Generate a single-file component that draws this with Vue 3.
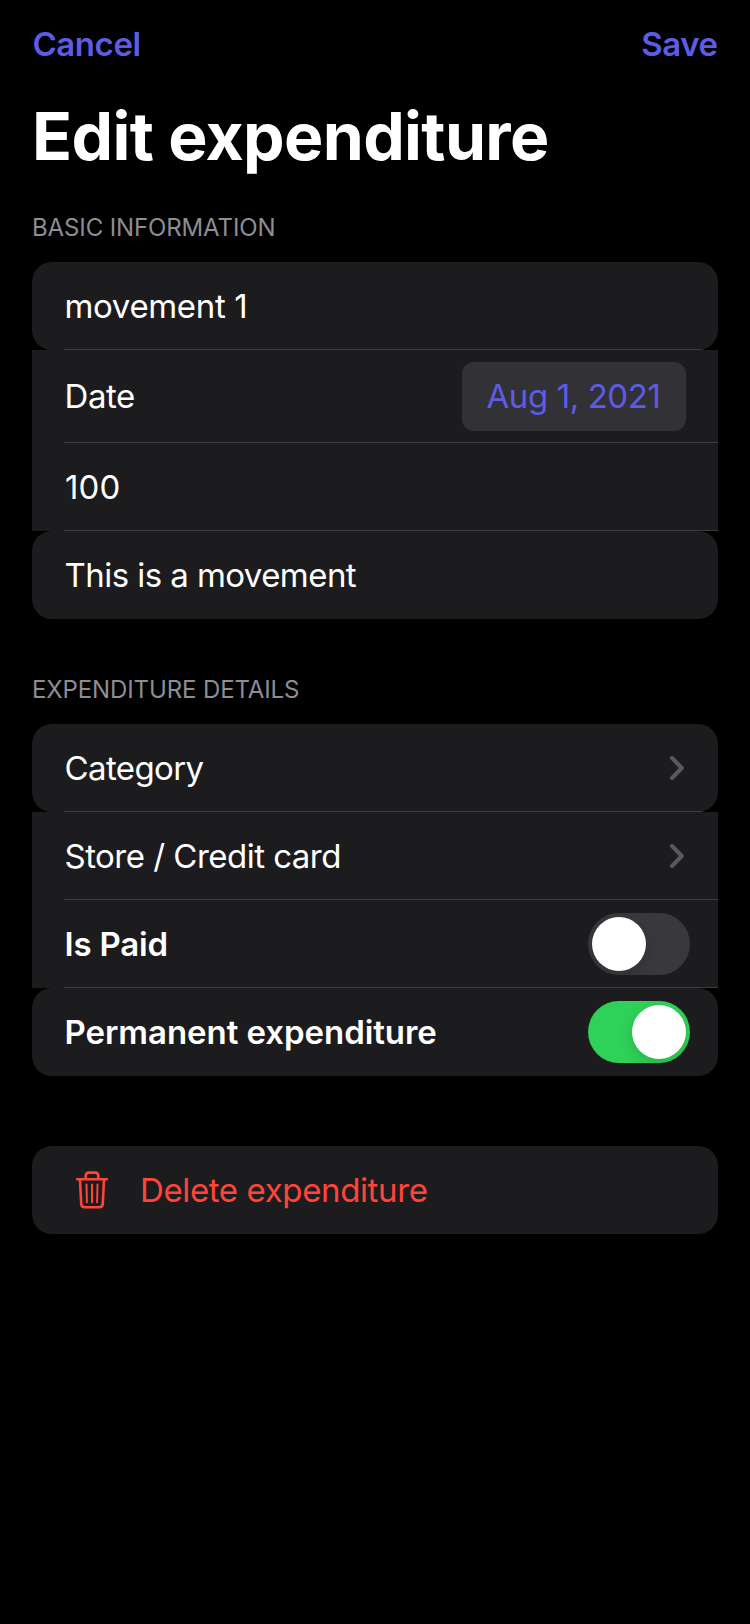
<script setup>
const basic = [
  { label: 'movement 1', cls: 't-move' },
  { label: 'Date', cls: 't-date', date: 'Aug 1, 2021' },
  { label: '100', cls: 't-num' },
  { label: 'This is a movement', cls: 't-note' },
]
const details = [
  { label: 'Category', cls: 't-cat', link: true },
  { label: 'Store / Credit card', cls: 't-store', link: true },
  { label: 'Is Paid', cls: 'strong t-paid', toggle: 'off' },
  { label: 'Permanent expenditure', cls: 'strong', toggle: 'on' },
]
</script>

<template>
  <main class="screen">
    <nav class="bar">
      <span class="action cancel">Cancel</span>
      <span class="action save">Save</span>
    </nav>
    <h1 class="title">Edit expenditure</h1>
    <h2 class="heading">BASIC INFORMATION</h2>
    <section class="group">
      <div v-for="r in basic" :key="r.label" class="row" :class="{ tall: r.date }">
        <span class="label" :class="r.cls">{{ r.label }}</span>
        <span v-if="r.date" class="date">{{ r.date }}</span>
      </div>
    </section>
    <h2 class="heading second">EXPENDITURE DETAILS</h2>
    <section class="group">
      <div v-for="r in details" :key="r.label" class="row">
        <span class="label" :class="r.cls">{{ r.label }}</span>
        <svg v-if="r.link" class="chevron" width="16" height="26" viewBox="0 0 16 26">
          <path d="M3 3L12.8 13L3 23" />
        </svg>
        <span v-if="r.toggle" class="toggle" :class="r.toggle"><span class="knob"></span></span>
      </div>
    </section>
    <section class="group danger">
      <div class="row">
        <svg class="trash" width="34" height="38" viewBox="0 0 34 38">
          <path d="M2.2 8.3H31.8M10.7 8V5Q10.7 1.6 13.8 1.6H20.2Q23.3 1.6 23.3 5V8M5 8.5L6.2 32.6Q6.4 36.2 9.8 36.2H24.2Q27.6 36.2 27.8 32.6L29 8.5" />
          <path class="thin" d="M11.5 13.5L11.9 31.2M17 13.5V31.2M22.5 13.5L22.1 31.2" />
        </svg>
        <span class="label t-del">Delete expenditure</span>
      </div>
    </section>
  </main>
</template>

<style>
html, body { background: #000; }
</style>

<style scoped>
.screen {
  box-sizing: border-box;
  width: 750px;
  height: 1624px;
  overflow: hidden;
  padding: 0 32px;
  background: #000;
  color: #fff;
  font-family: Inter, "Liberation Sans", sans-serif;
}

.bar { display: flex; justify-content: space-between; align-items: center; height: 88px; }
.action { color: #5e5ce6; font-size: 33px; font-weight: 600; line-height: 40px; }
.cancel { letter-spacing: -0.45px; padding-left: 0.5px; }
.save { letter-spacing: -0.5px; padding-right: 0.5px; }

.title { margin: 0; height: 96px; line-height: 96px; font-size: 66px; font-weight: 700; letter-spacing: -0.65px; }
.heading {
  box-sizing: border-box;
  margin: 0;
  height: 78px;
  padding-top: 28px;
  line-height: 32px;
  font-size: 24px;
  font-weight: 400;
  letter-spacing: -0.12px;
  color: #8d8d93;
}
.second { margin-top: 27px; }

.row {
  position: relative;
  box-sizing: border-box;
  display: flex;
  align-items: center;
  height: 88px;
  padding: 0 28px 0 32.5px;
  background: #1c1c1e;
  overflow: hidden;
}
.row:first-child, .row:last-child { border-radius: 20px; }
.row:not(:last-child)::after {
  content: "";
  position: absolute;
  left: 32px;
  right: 0;
  bottom: 0;
  height: 1px;
  background: #3d3d41;
}
.tall { height: 93px; padding-right: 32px; }

.label { flex: 1; font-size: 33px; line-height: 40px; font-weight: 400; white-space: nowrap; }
.strong { font-weight: 600; letter-spacing: -0.05px; }
.t-paid { letter-spacing: -0.2px; }
.t-move { letter-spacing: -0.35px; }
.t-date { letter-spacing: -0.4px; padding-bottom: 2px; }
.t-num { letter-spacing: 0.1px; padding-left: 0.5px; }
.t-note { letter-spacing: -0.56px; }
.t-cat { letter-spacing: -0.6px; }
.t-store { letter-spacing: -0.52px; }
.t-del { letter-spacing: -0.38px; color: #ff453a; }

.date {
  box-sizing: border-box;
  display: flex;
  align-items: center;
  justify-content: center;
  width: 224px;
  height: 69px;
  padding: 0 1px 2px 0;
  border-radius: 12px;
  background: #323136;
  color: #5e5ce6;
  font-size: 33px;
  letter-spacing: -0.4px;
}

.chevron, .trash { fill: none; stroke-linecap: round; stroke-linejoin: round; }
.chevron { margin-right: 5px; stroke: #5a5a5e; stroke-width: 4; }
.trash { margin: 0 31px 0 10.5px; stroke: #ff453a; stroke-width: 2.6; }
.thin { stroke-width: 2; }

.toggle {
  box-sizing: border-box;
  display: flex;
  width: 102px;
  height: 62px;
  padding: 4px;
  border-radius: 31px;
  background: #39383d;
  overflow: hidden;
}
.on { justify-content: flex-end; background: #30d158; }
.knob { width: 54px; height: 54px; border-radius: 50%; background: #fff; box-shadow: 0 5px 14px rgba(0, 0, 0, 0.15); }
.danger { margin-top: 70px; }
</style>
